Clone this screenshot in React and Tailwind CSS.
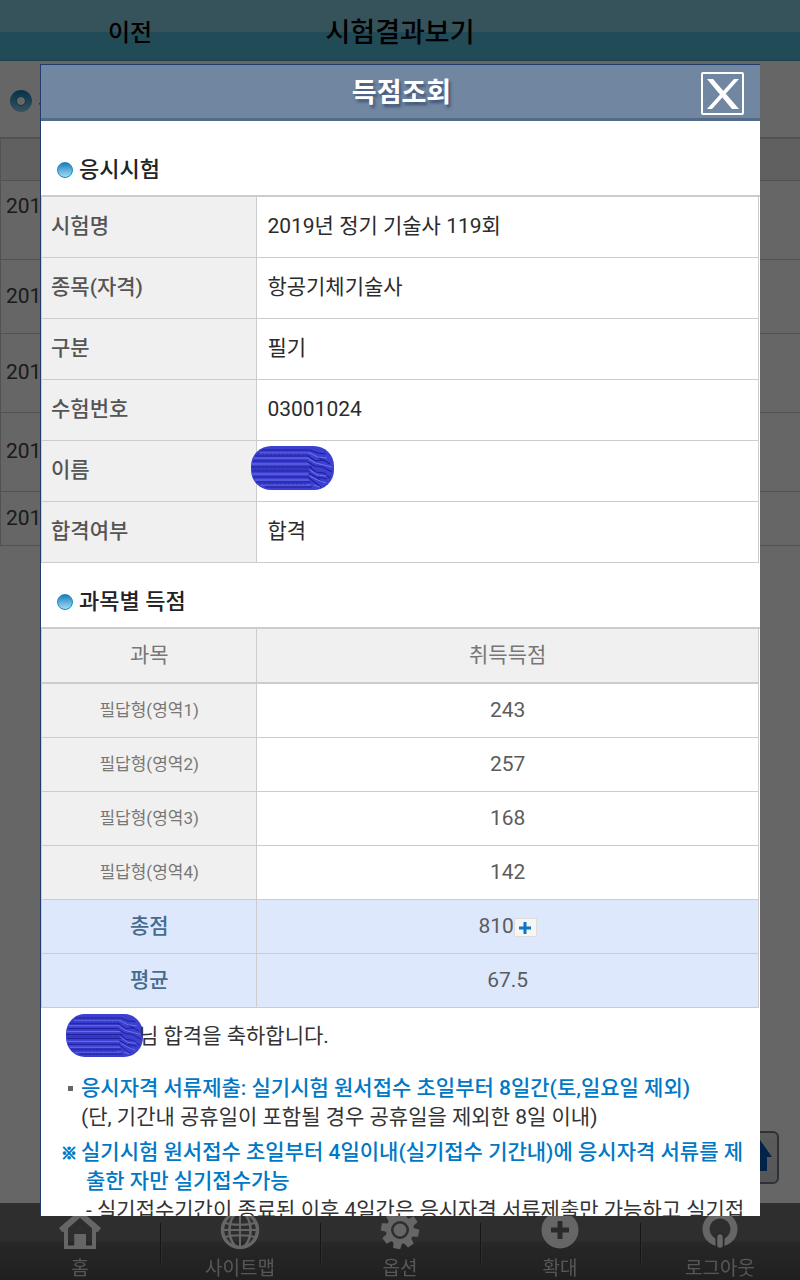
import clsx from 'clsx';

const examInfo = [
  { label: '시험명', value: '2019년 정기 기술사 119회' },
  { label: '종목(자격)', value: '항공기체기술사' },
  { label: '구분', value: '필기' },
  { label: '수험번호', value: '03001024' },
  { label: '이름', masked: true },
  { label: '합격여부', value: '합격' },
];

const scores = [
  { subject: '필답형(영역1)', score: '243' },
  { subject: '필답형(영역2)', score: '257' },
  { subject: '필답형(영역3)', score: '168' },
  { subject: '필답형(영역4)', score: '142' },
  { subject: '총점', score: '810', summary: true, more: true },
  { subject: '평균', score: '67.5', summary: true },
];

const historyRows = ['h-[79px] align-top pt-2.5', 'h-[74px]', 'h-[79px]', 'h-[79px]', 'h-[54px]'];

function HomeIcon() {
  return (
    <svg viewBox="0 0 42 42" className="size-[42px]" fill="currentColor">
      <path d="M21 1 0 19l3.500 4.500L5 22.300V40h32V22.300l1.500 1.200L42 19z M9 19.200 21 8.800l12 10.400V36.500h-6V25H15.500v11.500H9z" fillRule="evenodd" />
      <path d="M15.500 25H27v13H15.500z" />
    </svg>
  );
}

function GlobeIcon() {
  return (
    <svg viewBox="0 0 42 42" className="size-[42px]" fill="none" stroke="currentColor" strokeWidth="3">
      <circle cx="21" cy="21" r="17.500" strokeWidth="3.500" />
      <ellipse cx="21" cy="21" rx="10.500" ry="17.500" strokeWidth="2.500" />
      <path d="M21 3v36M5 13.500c8 3 24 3 32 0M5 28.500c8-3 24-3 32 0M3 21h36" strokeWidth="2" />
    </svg>
  );
}

function GearIcon() {
  return (
    <svg viewBox="0 0 42 42" className="size-[42px]" fill="none" stroke="currentColor">
      <circle cx="21" cy="21" r="11.500" strokeWidth="5" />
      <circle cx="21" cy="21" r="6.500" fill="currentColor" stroke="none" />
      {[0, 45, 90, 135, 180, 225, 270, 315].map((deg) => (
        <path key={deg} d="M16.500 9 17.500 2h7l1 7z" fill="currentColor" stroke="none" transform={`rotate(${deg + 10} 21 21)`} />
      ))}
    </svg>
  );
}

function PlusIcon() {
  return (
    <svg viewBox="0 0 42 42" className="size-[42px]">
      <circle cx="21" cy="21" r="18.500" fill="currentColor" />
      <path d="M21 12v18M12 21h18" stroke="#6a6a6a" strokeWidth="5" />
    </svg>
  );
}

function PowerIcon() {
  return (
    <svg viewBox="0 0 42 42" className="size-[42px]" fill="none">
      <circle cx="21" cy="20" r="14" stroke="currentColor" strokeWidth="7" />
      <path d="M21 28v8" stroke="#5f5f5f" strokeWidth="9" strokeLinecap="round" />
      <path d="M21 28v8" stroke="currentColor" strokeWidth="5.500" strokeLinecap="round" />
    </svg>
  );
}

const menus = [
  { label: '홈', Icon: HomeIcon },
  { label: '사이트맵', Icon: GlobeIcon },
  { label: '옵션', Icon: GearIcon },
  { label: '확대', Icon: PlusIcon },
  { label: '로그아웃', Icon: PowerIcon },
];

// Blue marker strokes that hide a name
function Mask({ className }) {
  return (
    <svg viewBox="0 0 82 44" preserveAspectRatio="none" className={className} aria-hidden="true">
      <rect width="82" height="44" rx="20" fill="#3c40d0" />
      <g fill="none" strokeWidth="1">
        <path d="M10 4h48M4 10h54M2 15h54M0 21h60M1 25h58M2 31h56M5 36h54M14 41h46" stroke="#1c1d98" />
        <path d="M9 7h50M3 12h55M1 18h57M1 28h56M4 34h54M9 39h50" stroke="#6a70ee" />
        <path d="M6 8h50M2 23h54M8 38h46" stroke="#2a2cb4" strokeDasharray="3 1" />
        <path d="M58 4l8 3 8 1M56 10l8 5 8-1 6 4M56 16l7 4 8 1 9 5M58 21l6 5 8 1 6 5M57 27l7 4 7 5M57 32l7 5 5 4M66 11l6 4M66 31l9 2" stroke="#1c1d98" />
        <path d="M58 7l8 4 9 1M57 13l7 4 8 2 8 2M58 24l8 5 9 1M58 30l8 4 8 3M62 39l6 2" stroke="#6a70ee" />
      </g>
    </svg>
  );
}

function SectionTitle({ children, className }) {
  return (
    <h2 className={clsx('flex items-center gap-1.5 pl-4 text-[22px] leading-7 font-medium text-[#222]', className)}>
      <span className="size-4 rounded-full border border-[#1688b8] bg-linear-to-b from-[#0a7fb8] to-[#9fdcf8]" />
      {children}
    </h2>
  );
}

function HistoryPage() {
  return (
    <div>
      <header className="grid h-[61px] grid-cols-[260px_1fr_260px] items-center border-b border-[#47a5bf] bg-linear-to-b from-[#87cde1] from-[32px] to-[#52bcda] to-[32px] pt-1.5 text-center text-black">
        <button type="button" className="text-2xl font-medium">이전</button>
        <h1 className="text-[27px] font-medium">시험결과보기</h1>
      </header>

      <div className="flex h-[76px] items-center gap-1.5 pt-1 pl-2.5 text-[21px] text-[#333]">
        <svg viewBox="0 0 22 22" className="size-[22px]">
          <defs>
            <linearGradient id="ring" x1="0" y1="0" x2="0" y2="1">
              <stop offset="0" stopColor="#087fb8" />
              <stop offset="1" stopColor="#8fd0ee" />
            </linearGradient>
          </defs>
          <circle cx="11" cy="11" r="11" fill="url(#ring)" />
          <circle cx="11" cy="11" r="4.500" fill="#fff" stroke="#2a86ae" />
        </svg>
        <span>시</span>
      </div>

      <table className="w-full border-separate border-spacing-0 border-t-2 border-l border-[#ccc] text-[21px] text-[#444]">
        <tbody>
          <tr>
            <td className="h-[42px] border-b border-[#ccc] bg-[#f0f0f0]" />
          </tr>
          {historyRows.map((cell, i) => (
            <tr key={i}>
              <td className={clsx('border-b border-[#ccc] pl-[5px]', cell)}>201</td>
            </tr>
          ))}
        </tbody>
      </table>

      <button type="button" aria-label="위로" className="fixed right-[21px] bottom-24 flex h-[53px] w-[43px] items-start justify-center rounded-md border-2 border-[#777c88] bg-linear-to-b from-[#e4e4e4] to-[#d6d8de] pt-1">
        <svg viewBox="0 0 28 34" className="h-[34px] w-7" fill="#0759b8">
          <path d="M14 0 28 20h-5v14H5V20H0z" />
        </svg>
      </button>

      <nav className="fixed inset-x-0 bottom-0 grid h-[77px] grid-cols-5 bg-linear-to-b from-[#737373] from-[48%] via-[#626262] via-[52%] to-[#505050] text-white">
        {menus.map(({ label, Icon }, i) => (
          <a key={label} href="#" className="flex items-stretch">
            <span className={clsx('mt-5 h-10 w-0.5', i > 0 && 'border-r border-l border-r-[#7c7c7c] border-l-[#333]')} />
            <span className="flex flex-1 flex-col items-center pt-1.5 pr-0.5">
              <Icon />
              <span className="mt-1.5 text-[19px] leading-6 text-[#d8d8d8]">{label}</span>
            </span>
          </a>
        ))}
      </nav>
    </div>
  );
}

export default function App() {
  return (
    <div className="font-[Roboto,'Noto_Sans_CJK_KR',sans-serif]" lang="ko">
      <HistoryPage />
      <div className="fixed inset-0 bg-black/60" />

      <section role="dialog" aria-label="득점조회" className="fixed inset-[5%] overflow-hidden border-t border-l border-[#233d6b] bg-white">
        <header className="relative flex h-14 items-center justify-center border-b-[3px] border-[#526b88] bg-[#7186a1] pt-1 pl-0.5">
          <h1 className="text-[27px] font-bold text-white text-shadow-[2px_3px_3px_#3f5378]">득점조회</h1>
          <button type="button" aria-label="닫기" className="absolute top-[7px] right-4 flex size-[43px] items-center justify-center rounded-xs border-2 border-white">
            <svg viewBox="0 0 34 32" className="h-8 w-[34px]" fill="#fff">
              <path d="M1 1h6l26 30h-7z" />
              <path d="M28 1h5L6 31H1z" />
            </svg>
          </button>
        </header>

        <SectionTitle className="pt-[35px] pb-[11px]">응시시험</SectionTitle>
        <table className="w-full border-separate border-spacing-0 border-t-2 border-[#ccc] pr-px text-[21px] leading-7">
          <tbody>
            {examInfo.map((row) => (
              <tr key={row.label}>
                <th scope="row" className="h-[61px] w-[30%] border-b border-l border-[#ccc] bg-[#f0f0f0] pb-0.5 pl-[9px] text-left font-medium text-[#555]">
                  {row.label}
                </th>
                <td className="relative border-x border-b border-[#ccc] pb-0.5 pl-2.5 text-[#2b2b2b]">
                  {row.masked ? <Mask className="absolute top-[5px] -left-1.5 h-11 w-[83px]" /> : row.value}
                </td>
              </tr>
            ))}
          </tbody>
        </table>

        <SectionTitle className="pt-[25px] pb-[11px]">과목별 득점</SectionTitle>
        <table className="w-full border-separate border-spacing-0 border-t-2 border-[#ccc] pr-px text-center text-[21px] leading-7 text-[#5c5c5c]">
          <thead>
            <tr className="bg-[#f0f0f0] text-[#777]">
              <th scope="col" className="h-[55px] w-[30%] border-b-2 border-l border-[#ccc] pb-0.5 font-normal">과목</th>
              <th scope="col" className="border-x border-b-2 border-[#ccc] pb-0.5 font-normal">취득득점</th>
            </tr>
          </thead>
          <tbody>
            {scores.map((row) => (
              <tr key={row.subject} className={clsx(row.summary && 'bg-[#dde8fc]')}>
                <th
                  scope="row"
                  className={clsx(
                    'h-[54px] border-b border-l border-[#ccc] pb-0.5',
                    row.summary ? 'font-medium text-[#456b8f]' : 'bg-[#f0f0f0] text-[17px] font-normal text-[#777]'
                  )}
                >
                  {row.subject}
                </th>
                <td className="border-x border-b border-[#ccc] pb-0.5">
                  <span className="inline-flex items-center">
                    {row.score}
                    {row.more && (
                      <button type="button" aria-label="펼치기" className="mt-1 flex h-[19px] w-[23px] items-center justify-center border border-[#ddd] bg-[#f6f6f6]">
                        <svg viewBox="0 0 12 12" className="size-3" stroke="#0a76c4" strokeWidth="3">
                          <path d="M6 0v12M0 6h12" />
                        </svg>
                      </button>
                    )}
                  </span>
                </td>
              </tr>
            ))}
          </tbody>
        </table>

        <div className="pr-3.5 pl-5 text-[21px] leading-[29px] text-[#333]">
          <p className="flex items-start pt-1.5 pl-[5px]">
            <Mask className="-mr-1 h-[43px] w-[77px]" />
            <span className="pt-2">님 합격을 축하합니다.</span>
          </p>
          <ul className="pt-[17px]">
            <li className="flex">
              <span className="mt-3 mr-2 ml-[7px] size-[5px] bg-[#666]" />
              <div>
                <strong className="block font-medium text-[#0078c6]">응시자격 서류제출: 실기시험 원서접수 초일부터 8일간(토,일요일 제외)</strong>
                (단, 기간내 공휴일이 포함될 경우 공휴일을 제외한 8일 이내)
              </div>
            </li>
            <li className="pt-1.5 pl-[25px]">
              <strong className="block -indent-[25px] font-medium text-[#0078c6]">
                <span className="inline-block w-5 indent-0 text-base leading-5 [-webkit-text-stroke:1px]">※</span>
                실기시험 원서접수 초일부터 4일이내(실기접수 기간내)에 응시자격 서류를 제출한 자만 실기접수가능
              </strong>
              - 실기접수기간이 종료된 이후 4일간은 응시자격 서류제출만 가능하고 실기접
            </li>
          </ul>
        </div>
      </section>
    </div>
  );
}
